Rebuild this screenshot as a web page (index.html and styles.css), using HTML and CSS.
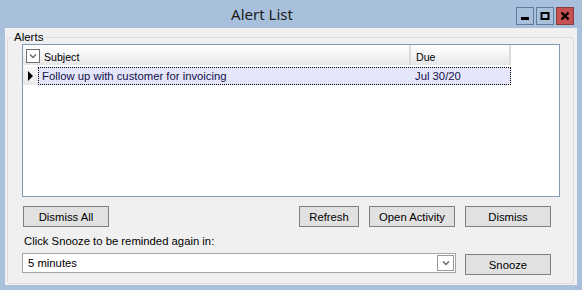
FILE: index.html
```html
<!DOCTYPE html>
<html lang="en">
<head>
  <meta charset="UTF-8">
  <title>Alert List</title>
  <link rel="stylesheet" href="styles.css">
</head>
<body>

  <div class="window">
    <div class="titlebar">
      <div class="title">Alert List</div>
      <div class="caption-buttons">
        <span class="cap-btn">
          <svg width="16" height="16" viewBox="0 0 16 16"><rect x="4" y="9" width="8" height="3" fill="#000"/></svg>
        </span>
        <span class="cap-btn">
          <svg width="16" height="16" viewBox="0 0 16 16"><rect x="4.5" y="5" width="7" height="6" fill="none" stroke="#000" stroke-width="2"/></svg>
        </span>
        <span class="cap-btn close">
          <svg width="16" height="16" viewBox="0 0 16 16"><path d="M4.5 4.5 L11.5 11.5 M11.5 4.5 L4.5 11.5" stroke="#000" stroke-width="2.4"/></svg>
        </span>
      </div>
    </div>

    <div class="client">
      <fieldset class="alerts">
        <legend>Alerts</legend>

        <!-- alert grid -->
        <div class="list">
          <div class="list-head">
            <div class="col col-subject">
              <span class="chk">
                <svg width="12" height="12" viewBox="0 0 12 12"><path d="M3 4.5 L6 7.5 L9 4.5" fill="none" stroke="#6d6d6d" stroke-width="1.5"/></svg>
              </span>
              <span class="col-text">Subject</span>
            </div>
            <div class="col col-due"><span class="col-text">Due</span></div>
            <div class="col col-fill"></div>
          </div>
          <div class="list-row">
            <div class="row-head">
              <svg width="6" height="10" viewBox="0 0 6 10"><path d="M0 0 L5 5 L0 10 Z" fill="#000"/></svg>
            </div>
            <div class="row-body">
              <span class="cell-subject">Follow up with customer for invoicing</span>
              <span class="cell-due">Jul 30/20</span>
            </div>
          </div>
        </div>

        <div class="actions">
          <button class="btn btn-wide dismiss-all">Dismiss All</button>
          <div class="spacer"></div>
          <button class="btn btn-refresh">Refresh</button>
          <button class="btn btn-wide">Open Activity</button>
          <button class="btn btn-wide">Dismiss</button>
        </div>

        <div class="snooze-label">Click Snooze to be reminded again in:</div>

        <div class="snooze-row">
          <div class="combo">
            <span class="combo-value">5 minutes</span>
            <span class="combo-arrow">
              <svg width="10" height="10" viewBox="0 0 10 10"><path d="M2 3.5 L5 6.5 L8 3.5" fill="none" stroke="#6d6d6d" stroke-width="1.5"/></svg>
            </span>
          </div>
          <button class="btn btn-wide snooze-btn">Snooze</button>
        </div>
      </fieldset>
    </div>
  </div>

</body>
</html>
```

FILE: styles.css
```css
body {
  margin: 0;
  font-family: "Liberation Sans", Arial, sans-serif;
  font-size: 11.3px;
  color: #000;
}

.window {
  width: 582px;
  height: 290px;
  background-color: #a8c0db;
  overflow: hidden;
}

.titlebar {
  height: 28px;
  display: flex;
  padding-right: 8px;
}

.title {
  flex: 1;
  text-align: center;
  padding-left: 8px;
  font-family: "Noto Sans", sans-serif;
  font-size: 15px;
  line-height: 29px;
  color: #1b1b1b;
}

.caption-buttons {
  display: flex;
  gap: 2px;
  margin-top: 7px;
}

.cap-btn {
  width: 18px;
  height: 18px;
  box-sizing: border-box;
  border: 1px solid #5f7c9d;
  display: flex;
  align-items: center;
  justify-content: center;
}

.cap-btn.close {
  background-color: #c75050;
  border-color: #8e3a3a;
}

.client {
  margin: 0 5px;
  height: 257px;
  background-color: #f0f0f0;
  overflow: hidden;
}

.alerts {
  margin: 2px 3px 0 2px;
  height: 254px;
  box-sizing: border-box;
  border: 1px solid #dcdcdc;
  border-radius: 3px;
  padding: 0 13px 0 14px;
}

.alerts legend {
  margin-left: -10px;
  padding: 0 2px;
  line-height: 14px;
  font-size: 11.5px;
}

/* grid */
.list {
  height: 153px;
  box-sizing: border-box;
  border: 1px solid #8399b6;
  background-color: #fff;
}

.list-head {
  display: flex;
  height: 20px;
}

.col {
  display: flex;
  align-items: center;
  box-sizing: border-box;
  background: linear-gradient(#ffffff, #f2f2f2 60%, #e6e6e6);
  border-right: 2px solid #dadada;
  font-size: 10.6px;
}

.col-text {
  padding-top: 4px;
}

.col-subject {
  width: 388px;
  padding-left: 3px;
}

.col-due {
  width: 100px;
  padding-left: 5px;
}

.col-fill {
  flex: 1;
  background: #fff;
  border: none;
}

.chk {
  width: 14px;
  height: 14px;
  box-sizing: border-box;
  border: 1px solid #707070;
  background-color: #fff;
  margin: 2px 4px 0 0;
  display: flex;
  align-items: center;
  justify-content: center;
}

.list-row {
  display: flex;
  margin-top: 2px;
  height: 18px;
}

.row-head {
  width: 15px;
  display: flex;
  align-items: center;
  justify-content: center;
  background: linear-gradient(#f7f7f7, #e9e9e9);
}

.row-body {
  width: 473px;
  box-sizing: border-box;
  display: flex;
  align-items: center;
  background-color: #e6e6fa;
  border: 1px dotted #000;
  color: #10104a;
}

.cell-subject {
  width: 373px;
  padding-left: 3px;
}

.cell-due {
  padding-left: 0;
}

/* buttons */
.actions {
  display: flex;
  gap: 10px;
  margin-top: 9px;
  padding-right: 9px;
}

.spacer {
  flex: 1;
}

.btn {
  height: 21px;
  box-sizing: border-box;
  background-color: #e1e1e1;
  border: 1px solid #7f7f7f;
  font-family: "Liberation Sans", Arial, sans-serif;
  font-size: 11.3px;
  color: #000;
  padding: 0;
}

.btn-wide {
  width: 86px;
}

.btn-refresh {
  width: 60px;
}

.dismiss-all {
  margin-left: 1px;
}

.snooze-label {
  margin-top: 7px;
  margin-left: 2px;
  line-height: 14px;
}

.snooze-row {
  display: flex;
  gap: 9px;
  margin-top: 5px;
  align-items: flex-start;
}

.combo {
  width: 434px;
  height: 20px;
  box-sizing: border-box;
  border: 1px solid #a6a6a6;
  background-color: #fff;
  display: flex;
  align-items: center;
}

.combo-value {
  flex: 1;
  padding-left: 5px;
}

.combo-arrow {
  width: 17px;
  height: 16px;
  box-sizing: border-box;
  border: 1px solid #9a9a9a;
  margin-right: 1px;
  display: flex;
  align-items: center;
  justify-content: center;
}

.snooze-btn {
  margin-top: 1px;
}
```
